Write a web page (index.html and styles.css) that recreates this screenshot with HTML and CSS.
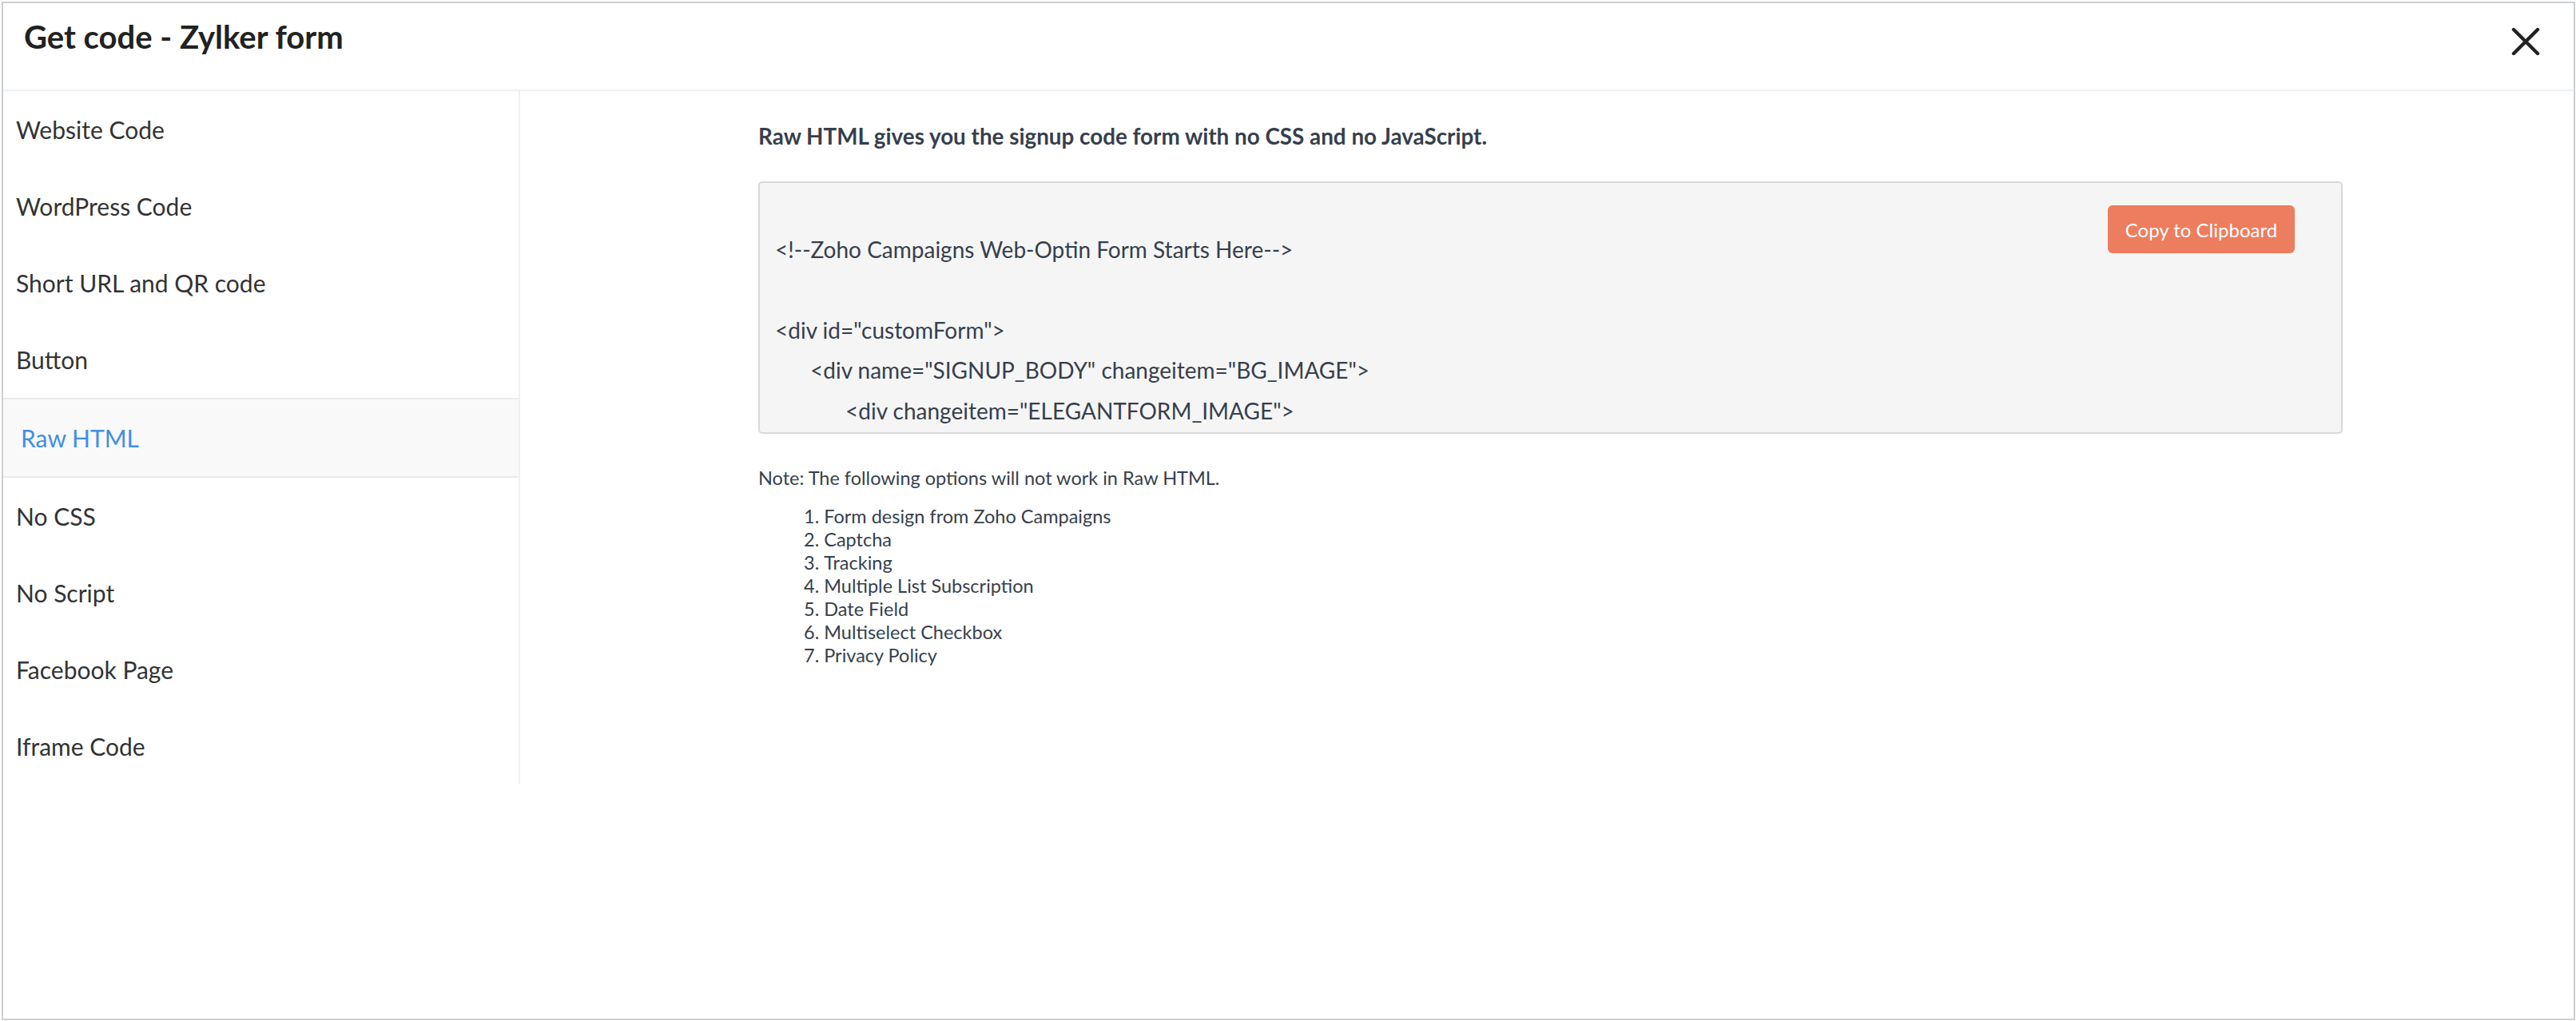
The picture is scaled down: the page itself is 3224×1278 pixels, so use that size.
FILE: index.html
```html
<!DOCTYPE html>
<html lang="en">
<head>
    <meta charset="UTF-8">
    <title>Get code - Zylker form</title>
    <link rel="stylesheet" href="styles.css">
</head>
<body>
    <div class="modal">
        <header class="modal-head">
            <h2>Get code - Zylker form</h2>
            <button class="close-btn" title="Close">
                <svg width="36" height="36" viewBox="0 0 36 36"><path d="M3 3 L33 33 M33 3 L3 33" stroke="#222" stroke-width="4.4" stroke-linecap="round" fill="none"/></svg>
            </button>
        </header>
        <div class="modal-body">
            <ul class="side-nav">
                <li>Website Code</li>
                <li>WordPress Code</li>
                <li>Short URL and QR code</li>
                <li>Button</li>
                <li class="active">Raw HTML</li>
                <li>No CSS</li>
                <li>No Script</li>
                <li>Facebook Page</li>
                <li>Iframe Code</li>
            </ul>
            <main class="panel">
                <p class="panel-intro">Raw HTML gives you the signup code form with no CSS and no JavaScript.</p>
                <div class="code-box">
                    <button class="copy-btn">Copy to Clipboard</button>
                    <div class="code-text">
                        <div class="code-line">&nbsp;</div>
                        <div class="code-line">&lt;!--Zoho Campaigns Web-Optin Form Starts Here--&gt;</div>
                        <div class="code-line">&nbsp;</div>
                        <div class="code-line">&lt;div id="customForm"&gt;</div>
                        <div class="code-line indent-1">&lt;div name="SIGNUP_BODY" changeitem="BG_IMAGE"&gt;</div>
                        <div class="code-line indent-2">&lt;div changeitem="ELEGANTFORM_IMAGE"&gt;</div>
                    </div>
                </div>
                <p class="note">Note: The following options will not work in Raw HTML.</p>
                <ol class="note-list">
                    <li>Form design from Zoho Campaigns</li>
                    <li>Captcha</li>
                    <li>Tracking</li>
                    <li>Multiple List Subscription</li>
                    <li>Date Field</li>
                    <li>Multiselect Checkbox</li>
                    <li>Privacy Policy</li>
                </ol>
            </main>
        </div>
    </div>
</body>
</html>
```

FILE: styles.css
```css
body {
    font-family: Lato, 'Open Sans', sans-serif;
    margin: 0;
    background: #fff;
}
.modal {
    margin: 2px 1px 0 2px;
    height: 1275px;
    box-sizing: border-box;
    border: 2px solid #cdd0d3;
    background: #fff;
    display: flex;
    flex-direction: column;
}
.modal-head {
    display: flex;
    justify-content: space-between;
    align-items: flex-start;
    height: 110px;
    box-sizing: border-box;
    padding: 18px 0 0 26px;
    border-bottom: 2px solid #eef1f4;
    flex-shrink: 0;
}
.modal-head h2 {
    margin: 0;
    font-size: 40px;
    font-weight: 700;
    color: #222;
}
.close-btn {
    margin: 12px 42px 0 0;
    padding: 0;
    width: 36px;
    height: 36px;
    border: none;
    background: none;
    cursor: pointer;
}
.close-btn svg {
    display: block;
}
.modal-body {
    display: flex;
    align-items: flex-start;
    flex: 1;
}
.side-nav {
    width: 645px;
    flex-shrink: 0;
    margin: 0;
    padding: 0;
    list-style: none;
    border-right: 2px solid #eef1f4;
}
.side-nav li {
    height: 96px;
    display: flex;
    align-items: center;
    padding-left: 16px;
    font-size: 30px;
    color: #333;
    cursor: pointer;
}
.side-nav li.active {
    padding-left: 22px;
    color: #3f8fe4;
    background: #f9f9f9;
    border-top: 2px solid #ebebeb;
    border-bottom: 2px solid #ebebeb;
}
.panel {
    flex: 1;
    padding: 0 289px 0 298px;
    color: #363f4c;
}
.panel-intro {
    margin: 40px 0 0 0;
    font-size: 27.8px;
    font-weight: 700;
}
.code-box {
    position: relative;
    margin-top: 40px;
    height: 316px;
    box-sizing: border-box;
    border: 2px solid #d9d9d9;
    border-radius: 5px;
    background: #f5f5f5;
    overflow: hidden;
    padding: 7px 19px;
}
.code-line {
    font-size: 28px;
    line-height: 50.5px;
    white-space: nowrap;
}
.indent-1 {
    padding-left: 44px;
}
.indent-2 {
    padding-left: 88px;
}
.copy-btn {
    position: absolute;
    top: 28px;
    right: 58px;
    width: 234px;
    height: 60px;
    border: none;
    border-radius: 6px;
    background: #ed7d5f;
    color: #fff;
    font-family: Lato, sans-serif;
    font-size: 24px;
    cursor: pointer;
}
.note {
    margin: 41px 0 0 0;
    font-size: 23.5px;
}
.note-list {
    margin: 20px 0 0 0;
    padding-left: 57px;
    list-style-position: inside;
    font-size: 23.5px;
    line-height: 29px;
}
```
